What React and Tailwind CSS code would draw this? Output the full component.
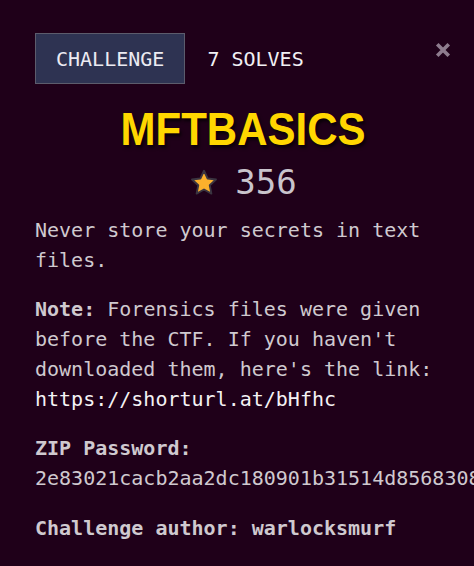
const mono = { fontFamily: '"DejaVu Sans Mono", "Liberation Mono", monospace' };

function Star() {
  return (
    <svg width="30" height="30" viewBox="0 0 24 24" aria-hidden="true">
      <path
        d="M12 2.2l2.9 6.2 6.7.8-5 4.6 1.3 6.7L12 17.2l-5.9 3.3 1.3-6.7-5-4.6 6.7-.8z"
        fill="#fbb02c"
        stroke="#3a3440"
        strokeWidth="1.5"
        strokeLinejoin="round"
      />
    </svg>
  );
}

export default function App() {
  return (
    <div
      className="relative min-h-screen w-full overflow-hidden bg-[#1f0019] pl-[35px] pr-[23px] pt-[33px] text-[20px] leading-[30px] text-[#cfc9cf]"
      style={mono}
    >
      {/* header */}
      <div className="flex items-center">
        <div className="flex h-[51px] items-center border border-[#5c5c6c] bg-[#2e3352] px-[20px] text-[#ecebf2]">
          CHALLENGE
        </div>
        <span className="ml-[22px] text-[#f2f0f4]">7 SOLVES</span>
      </div>
      <button className="absolute right-[23px] top-[42px] text-[#8e7c8e]">
        <svg width="16" height="16" viewBox="0 0 16 16" aria-hidden="true">
          <path d="M3.5 3.5l9 9M12.5 3.5l-9 9" stroke="currentColor" strokeWidth="3.6" strokeLinecap="square" />
        </svg>
      </button>

      {/* title + points */}
      <h1
        className="mt-[18px] text-center text-[42px] font-bold leading-[55px] text-[#ffd700] [text-shadow:2px_2px_3px_rgba(0,0,0,0.7)]"
        style={{ fontFamily: '"Liberation Sans", Arial, sans-serif' }}
      >
        <span className="inline-block origin-center scale-y-[1.1]">MFTBASICS</span>
      </h1>
      <div className="mt-[5px] flex items-center justify-center gap-[16px]">
        <Star />
        <span className="text-[34px] leading-[41px] text-[#c9c4cc]">356</span>
      </div>

      {/* description */}
      <div className="mt-[12px]">
        <p>Never store your secrets in text files.</p>
        <p className="mt-[19px]">
          <strong className="font-bold">Note:</strong> Forensics files were given before the CTF. If you haven't
          downloaded them, here's the link: <span className="text-[#f4f2f4]">https://shorturl.at/bHfhc</span>
        </p>
        <p className="mt-[19px]">
          <strong className="font-bold">ZIP Password:</strong>
          <br />
          <span className="whitespace-nowrap">2e83021cacb2aa2dc180901b31514d856830876a</span>
        </p>
        <p className="mt-[20px] font-bold">Challenge author: warlocksmurf</p>
      </div>
    </div>
  );
}
